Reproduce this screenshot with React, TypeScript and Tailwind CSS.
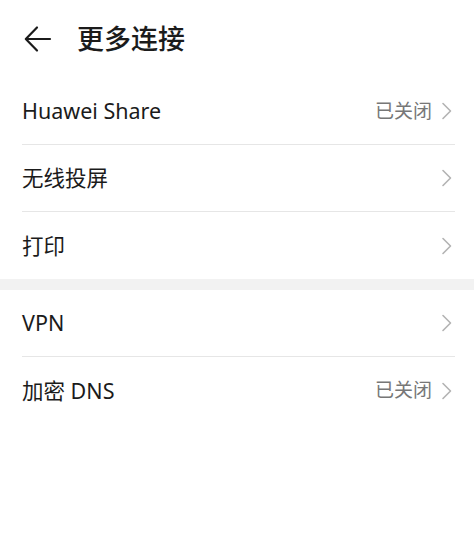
import React from 'react';

type Item = { label: string; value?: string };

const groupOne: Item[] = [
    { label: 'Huawei Share', value: '已关闭' },
    { label: '无线投屏' },
    { label: '打印' },
];

const groupTwo: Item[] = [
    { label: 'VPN' },
    { label: '加密 DNS', value: '已关闭' },
];

const Chevron = () => (
    <svg width="12" height="18" viewBox="0 0 12 18" fill="none">
        <path d="M2 1.5 L9.5 9 L2 16.5" stroke="#b3b3b3" strokeWidth="1.6" strokeLinecap="round" strokeLinejoin="round" />
    </svg>
);

const Row = ({ item, last }: { item: Item; last: boolean }) => (
    <div className="ml-[22px] mr-[19px] h-[67px] flex items-center justify-between" style={last ? undefined : { borderBottom: '1px solid #e6e6e6' }}>
        <span className="text-[21.5px] text-[#1b1b1b] leading-none">{item.label}</span>
        <div className="flex items-center gap-[9px] pr-[2px]">
            {item.value && <span className="text-[19px] text-[#777777] leading-none">{item.value}</span>}
            <Chevron />
        </div>
    </div>
);

const App: React.FC = () => {
    return (
        <div
            className="w-[474px] h-[533px] bg-white overflow-hidden"
            style={{ fontFamily: '"Noto Sans", "Noto Sans CJK SC", sans-serif' }}
        >
            {/* Header */}
            <div className="h-[78px] flex items-center pl-[24px] pb-[1px]">
                <svg width="28" height="28" viewBox="0 0 28 28" fill="none">
                    <path d="M26 14 H2 M13 2.5 L1.8 14 L13 25.5" stroke="#1b1b1b" strokeWidth="2.2" strokeLinecap="round" strokeLinejoin="round" />
                </svg>
                <h1 className="ml-[25px] text-[27px] font-medium text-[#1b1b1b] leading-none">更多连接</h1>
            </div>

            {groupOne.map((item, i) => (
                <Row key={item.label} item={item} last={i === groupOne.length - 1} />
            ))}

            <div className="h-[11px] bg-[#f2f2f2]" />

            {groupTwo.map((item, i) => (
                <Row key={item.label} item={item} last={i === groupTwo.length - 1} />
            ))}
        </div>
    );
};

export default App;
